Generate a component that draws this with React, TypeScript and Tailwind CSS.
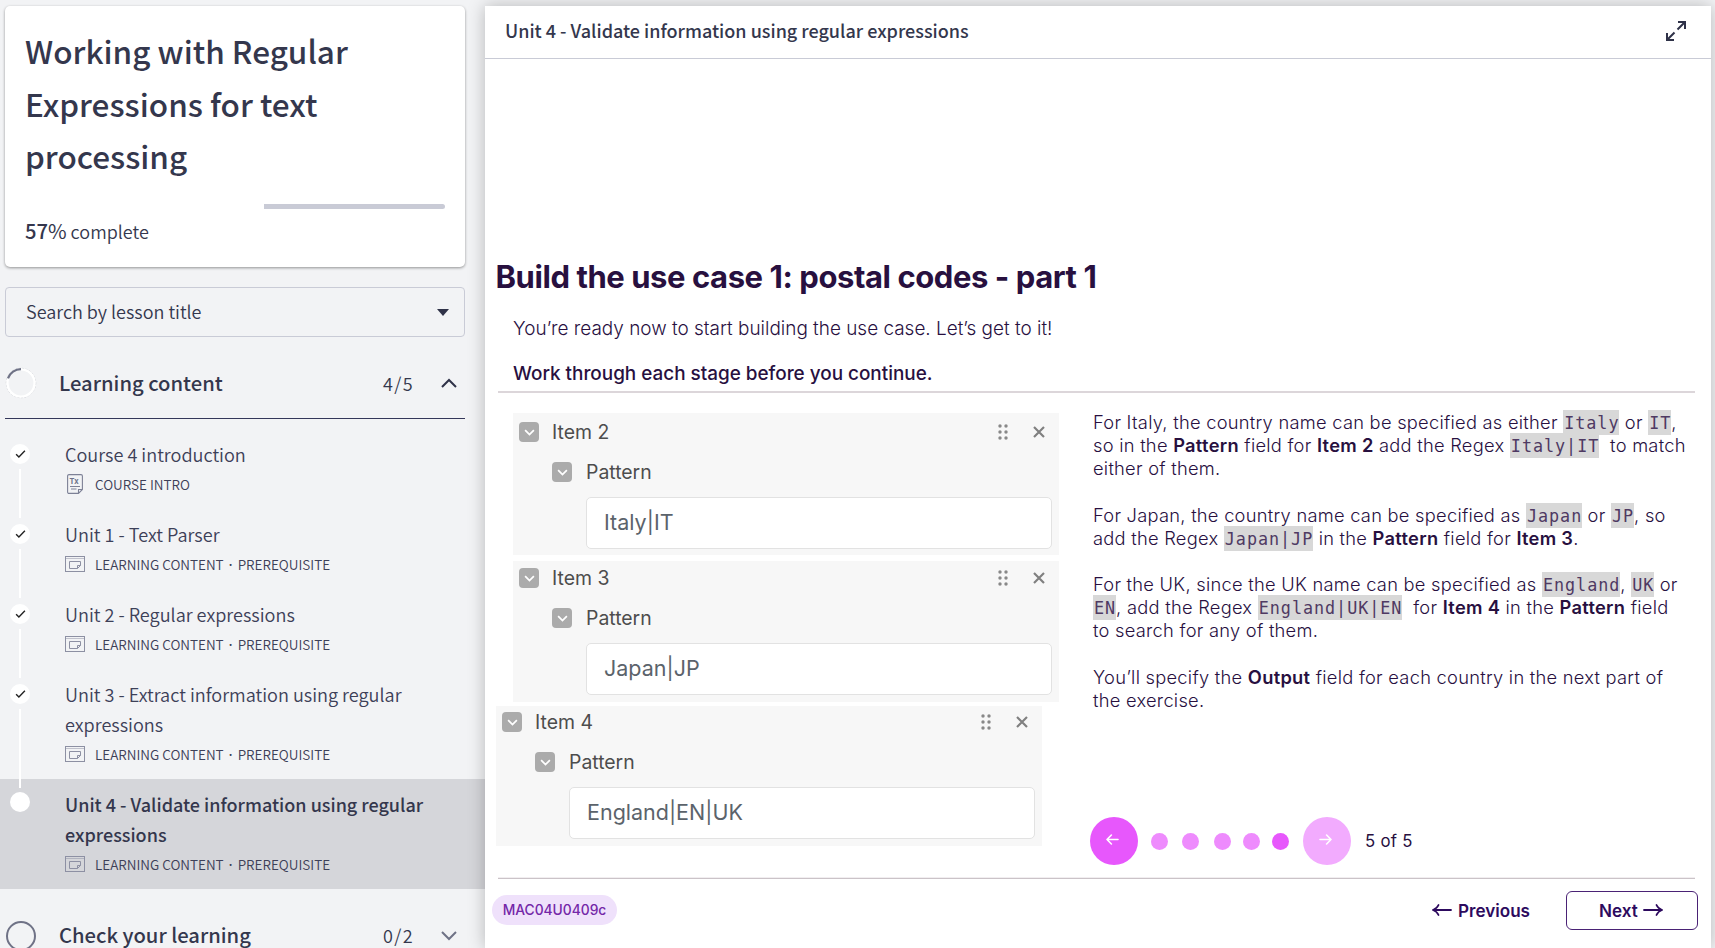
import React, { ReactNode } from "react";

const sourceFont = "font-['Noto_Sans_CJK_SC',sans-serif]";

function CheckMark() {
  return (
    <svg viewBox="0 0 10 8" className="h-[8px] w-[11px]" fill="none" stroke="#222" strokeWidth="1.4">
      <path d="M0.6 4.2 3.4 7 9.4 0.8" />
    </svg>
  );
}

function ModuleIcon() {
  return (
    <svg viewBox="0 0 20 16" className="h-4 w-5" fill="none" stroke="#8d90a3" strokeWidth="1">
      <rect x="0.5" y="0.5" width="19" height="15" />
      <path d="M0 2.5H20" strokeOpacity="0.5" />
      <path d="M4.5 5.5H15.5V9.5L12.5 12.5H4.5Z" />
      <path d="M12.5 12.5V9.5H15.5" />
    </svg>
  );
}

function IntroIcon() {
  return (
    <svg viewBox="0 0 16 20" className="ml-[2px] h-5 w-4" fill="none" stroke="#7d8196" strokeWidth="1.1">
      <path d="M2 .6H14A1.4 1.4 0 0 1 15.4 2V15.5L11.5 19.4H2A1.4 1.4 0 0 1 .6 18V2A1.4 1.4 0 0 1 2 .6Z" />
      <path d="M11.5 19V15.5H15M3 12.5H13M4 15H9.5" />
      <text x="2.6" y="9.8" fontSize="7.8" fontWeight="700" fontFamily="Noto Sans CJK SC" fill="#6f7389" stroke="none">Tx</text>
    </svg>
  );
}

type Lesson = { lines: string[]; kind: string; prerequisite?: boolean; current?: boolean };

const lessons: Lesson[] = [
  { lines: ["Course 4 introduction"], kind: "COURSE INTRO" },
  { lines: ["Unit 1 - Text Parser"], kind: "LEARNING CONTENT", prerequisite: true },
  { lines: ["Unit 2 - Regular expressions"], kind: "LEARNING CONTENT", prerequisite: true },
  { lines: ["Unit 3 - Extract information using regular", "expressions"], kind: "LEARNING CONTENT", prerequisite: true },
  { lines: ["Unit 4 - Validate information using regular", "expressions"], kind: "LEARNING CONTENT", prerequisite: true, current: true },
];

function LessonRow({ lesson }: { lesson: Lesson }) {
  return (
    <li className={"relative flex py-[10px] " + (lesson.current ? "bg-[#d5d6da]" : "")}>
      <div className={"ml-[10px] flex h-5 w-5 shrink-0 items-center justify-center rounded-full bg-white " + (lesson.current ? "mt-[3px]" : "mt-[5px]")}>
        {!lesson.current && <CheckMark />}
      </div>
      {!lesson.current && (
        <div className={"absolute left-[19px] top-[40px] z-10 w-[2px] bg-white " + (lesson.lines.length > 1 ? "h-[79px]" : "h-[49px]")} />
      )}
      <div className="ml-[35px] text-[#3d4058]">
        {lesson.lines.map((line) => (
          <div key={line} className={"whitespace-pre leading-[30px] " + (lesson.current ? "text-[18px] font-medium text-[#34374d]" : "text-[18.1px] font-[350]")}>{line}</div>
        ))}
        <div className="flex h-[30px] items-center text-[13.5px] font-[350] leading-[30px]">
          <span className="flex w-[30px]">{lesson.prerequisite ? <ModuleIcon /> : <IntroIcon />}</span>
          <span>{lesson.kind}</span>
          {lesson.prerequisite && <><span className="w-[14px] pt-[1px] text-center font-['Noto_Sans',sans-serif] font-medium">·</span><span>PREREQUISITE</span></>}
        </div>
      </div>
    </li>
  );
}

function Sidebar() {
  return (
    <aside className={sourceFont + " flex w-[485px] shrink-0 flex-col bg-[#f2f3f5] pt-[6px] text-[#34374d]"}>
      <div className="ml-[5px] h-[261px] w-[460px] shrink-0 rounded-[5px] bg-white px-5 pt-[18px] shadow-[0_1px_3px_rgba(0,0,0,0.4)]">
        <h1 className="whitespace-pre text-[31.5px] font-medium leading-[52.5px]">Working with Regular<br />Expressions for text<br />processing</h1>
        <div className="mt-[22px] flex h-[5px] w-[420px] overflow-hidden rounded-full bg-white">
          <div className="ml-auto w-[181px] bg-[#c9cbd6]" />
        </div>
        <p className="mt-[7px] text-[18px] font-[350] leading-[30px]"><span className="text-[20.2px] font-medium">57<span className="font-normal">%</span></span> complete</p>
      </div>
      <div className="ml-[5px] mt-[20px] flex h-[50px] w-[460px] shrink-0 items-center justify-between rounded-[4px] border border-[#c9cbd6] pl-[20px] pr-[15px] text-[18px] font-[350]">
        <span className="pb-[2px]">Search by lesson title</span>
        <svg viewBox="0 0 12 7" className="h-[7px] w-[12px]" fill="#2f3248"><path d="M0 0H12L6 7Z" /></svg>
      </div>
      <div className="ml-[5px] mt-[11px] flex h-[71px] w-[460px] shrink-0 items-center border-b border-[#34375a]">
        <svg viewBox="0 0 32 32" className="h-8 w-8" fill="none">
          <circle cx="16" cy="16" r="14.7" stroke="#b9bac2" strokeWidth=".7" strokeDasharray="2 1.5" />
          <circle cx="16" cy="16" r="13.6" stroke="#fff" strokeWidth="2.4" />
          <path d="M3 11.3A13.8 13.8 0 0 1 16 2.2" stroke="#6f7286" strokeWidth="2.2" />
        </svg>
        <span className="ml-[22px] text-[20.2px] font-medium">Learning content</span>
        <span className="ml-auto text-[18px] font-[350] tracking-[1.4px]">4/5</span>
        <svg viewBox="0 0 16 10" className="ml-[27px] mr-[8px] h-[10px] w-4" fill="none" stroke="#2f3248" strokeWidth="2"><path d="M1 9 8 2 15 9" /></svg>
      </div>
      <ul className="mt-[10px] shrink-0">{lessons.map((l) => <LessonRow key={l.lines[0]} lesson={l} />)}</ul>
      <div className="ml-[5px] mt-[11px] flex h-[71px] w-[460px] shrink-0 items-center">
        <svg viewBox="0 0 32 32" className="h-8 w-8" fill="none"><circle cx="16" cy="16" r="14" stroke="#6f7286" strokeWidth="2" /></svg>
        <span className="ml-[22px] text-[20.2px] font-medium">Check your learning</span>
        <span className="ml-auto text-[18px] font-[350] tracking-[1.4px]">0/2</span>
        <svg viewBox="0 0 16 10" className="ml-[27px] mr-[8px] h-[10px] w-4" fill="none" stroke="#6f7286" strokeWidth="2"><path d="M1 1 8 8 15 1" /></svg>
      </div>
    </aside>
  );
}

function Toggle() {
  return (
    <span className="flex h-5 w-5 items-center justify-center rounded-[4px] bg-[#ababab]">
      <svg viewBox="0 0 12 8" className="h-[7px] w-[11px]" fill="none" stroke="#fff" strokeWidth="2"><path d="M1 1.2 6 6.4 11 1.2" /></svg>
    </span>
  );
}

function PatternBlock({ title, value, className }: { title: string; value: string; className: string }) {
  return (
    <section className={"flex w-[546px] flex-col bg-[#f7f7f7] text-[#4d4d4d] " + className}>
      <div className="ml-[6px] flex h-5 items-center">
        <Toggle />
        <span className="ml-[13px] text-[19.4px] leading-5">{title}</span>
        <svg viewBox="0 0 10 16" className="ml-auto h-4 w-[10px]" fill="#888">
          {[2, 8, 14].map((y) => <g key={y}><circle cx="2" cy={y} r="1.7" /><circle cx="8" cy={y} r="1.7" /></g>)}
        </svg>
        <svg viewBox="0 0 12 12" className="ml-[25px] mr-[14px] h-3 w-3" fill="none" stroke="#808080" strokeWidth="2.2"><path d="M1 1 11 11M11 1 1 11" /></svg>
      </div>
      <div className="ml-[39px] mt-[20px] flex h-5 items-center">
        <Toggle />
        <span className="ml-[14px] text-[19.4px] leading-5">Pattern</span>
      </div>
      <div className="ml-[73px] mt-[15px] flex h-[52px] w-[466px] items-center rounded-[5px] border border-[#e2e2e2] bg-white pb-[1px] pl-[17px] text-[21.5px] text-[#5b636b]">{value}</div>
    </section>
  );
}

function C({ children }: { children: ReactNode }) {
  return <code className="bg-[#d8d8d8] pb-[2.1px] pl-[1px] pt-[2.7px] font-['DejaVu_Sans_Mono',monospace] text-[16.8px] tracking-[0.95px] text-[#4f3a63]">{children}</code>;
}

function B({ children }: { children: ReactNode }) {
  return <strong className="font-semibold tracking-[0.3px]">{children}</strong>;
}

function Line({ children }: { children: ReactNode }) {
  return <div className="h-[23.15px] whitespace-pre">{children}</div>;
}

function Arrow({ left }: { left?: boolean }) {
  return (
    <svg viewBox="0 0 20 12" className={"h-[12px] w-5 " + (left ? "rotate-180" : "")} fill="none" stroke="currentColor" strokeWidth="1.8" strokeLinecap="round" strokeLinejoin="round">
      <path d="M1 6H19M13.5 1Q15 4.5 19 6Q15 7.5 13.5 11" />
    </svg>
  );
}

function SmallArrow({ left }: { left?: boolean }) {
  return (
    <svg viewBox="0 0 13 11" className={"mr-[3px] mb-[2px] h-[11px] w-[13px] " + (left ? "rotate-180" : "")} fill="none" stroke="#fff" strokeWidth="1.6" strokeLinecap="round" strokeLinejoin="round">
      <path d="M1 5.5H12M7.6 1 12 5.5 7.6 10" />
    </svg>
  );
}

function Pagination() {
  return (
    <div className="-ml-[3px] mt-[105px] flex h-12 items-center">
      <span className="flex h-12 w-12 items-center justify-center rounded-full bg-[#e757fc]"><SmallArrow left /></span>
      <span className="ml-[13px] mt-[2px] h-[17px] w-[17px] rounded-full bg-[#ee8bfd]" />
      <span className="ml-[14px] mt-[2px] h-[17px] w-[17px] rounded-full bg-[#ee8bfd]" />
      <span className="ml-[15px] mt-[2px] h-[17px] w-[17px] rounded-full bg-[#ee8bfd]" />
      <span className="ml-[12px] mt-[2px] h-[17px] w-[17px] rounded-full bg-[#ee8bfd]" />
      <span className="ml-[12px] mt-[2px] h-[17px] w-[17px] rounded-full bg-[#e757fc]" />
      <span className="ml-[14px] flex h-12 w-12 items-center justify-center rounded-full bg-[#f2abfe]"><SmallArrow /></span>
      <span className="ml-[14px] pt-[1px] text-[16.8px] font-normal">5 of 5</span>
    </div>
  );
}

function Content() {
  return (
    <main className="relative mt-[6px] flex w-[1226px] flex-col bg-white shadow-[0_0_16px_rgba(0,0,0,0.25)]">
      <header className={sourceFont + " flex h-[53px] shrink-0 items-center justify-between border-b border-[#c9cbd6] pl-5 pr-[25px]"}>
        <h2 className="pb-[3px] text-[18px] font-medium text-[#34374d]">Unit 4 - Validate information using regular expressions</h2>
        <svg viewBox="0 0 20 20" className="mb-[2px] h-5 w-5" fill="none" stroke="#2f3248" strokeWidth="2">
          <path d="M12 1H19V8M19 1 11.5 8.5M8 19H1V12M1 19 8.5 11.5" />
        </svg>
      </header>
      <div className="flex flex-col font-['Inter',sans-serif] text-[#28103f]">
        <h3 className="ml-[10.5px] mt-[194px] whitespace-pre text-[31px] font-[650] leading-[48px] tracking-[-0.43px]">Build the use case 1: postal codes - part 1</h3>
        <p className="ml-[28px] mt-[13px] whitespace-pre text-[18.95px] font-light leading-[30px]">You’re ready now to start building the use case. Let’s get to it!</p>
        <p className="ml-[28px] mt-[15px] whitespace-pre text-[18.9px] font-medium leading-[30px]">Work through each stage before you continue.</p>
        <div className="ml-[13px] mt-[2px] h-[2px] w-[1197px] bg-[#dcd6da]" />
        <div className="flex">
          <div className="flex w-[594px] flex-col pt-[20px]">
            <PatternBlock title="Item 2" value="Italy|IT" className="ml-[28px] h-[142px] pt-[9px]" />
            <PatternBlock title="Item 3" value="Japan|JP" className="ml-[28px] mt-[6px] h-[141px] pt-[7px]" />
            <PatternBlock title="Item 4" value="England|EN|UK" className="ml-[11px] mt-[4px] h-[140px] pt-[6px]" />
          </div>
          <div className="ml-[14px] flex flex-col pt-[18px] text-[18.3px] font-light leading-[23.15px] tracking-[0.26px]">
            <Line>For Italy, the country name can be specified as either <C>Italy</C> or <C>IT</C>,</Line>
            <Line>so in the <B>Pattern</B> field for <B>Item 2</B> add the Regex <C>Italy|IT</C>  to match</Line>
            <Line>either of them.</Line>
            <Line> </Line>
            <Line>For Japan, the country name can be specified as <C>Japan</C> or <C>JP</C>, so</Line>
            <Line>add the Regex <C>Japan|JP</C> in the <B>Pattern</B> field for <B>Item 3</B>.</Line>
            <Line> </Line>
            <Line>For the UK, since the UK name can be specified as <C>England</C>, <C>UK</C> or</Line>
            <Line><C>EN</C>, add the Regex <C>England|UK|EN</C>  for <B>Item 4</B> in the <B>Pattern</B> field</Line>
            <Line>to search for any of them.</Line>
            <Line> </Line>
            <Line>You’ll specify the <B>Output</B> field for each country in the next part of</Line>
            <Line>the exercise.</Line>
            <Pagination />
          </div>
        </div>
        <div className="ml-[13px] mt-[12px] h-[2px] w-[1197px] border-b border-[#cbc3c8] bg-[#f1eef0]" />
        <footer className="flex h-[63px] items-center pl-[7px] pr-[13px]">
          <span className="flex h-[30px] w-[125px] items-center justify-center rounded-full bg-[#efe1fb] text-[13.8px] font-medium text-[#7427a8]">MAC04U0409c</span>
          <button className="ml-auto flex items-center gap-[6px] text-[17.1px] font-semibold text-[#2d0a5e]"><Arrow left />Previous</button>
          <button className="ml-[36px] flex h-[39px] w-[132px] items-center justify-center gap-[5px] rounded-[6px] border-[1.5px] border-[#4a2275] pr-[2px] text-[17.1px] font-semibold text-[#2d0a5e]">Next<Arrow /></button>
        </footer>
      </div>
    </main>
  );
}

export default function App() {
  return (
    <div className="flex h-[948px] w-[1715px] overflow-hidden bg-[#f2f3f5]">
      <Sidebar />
      <Content />
    </div>
  );
}
